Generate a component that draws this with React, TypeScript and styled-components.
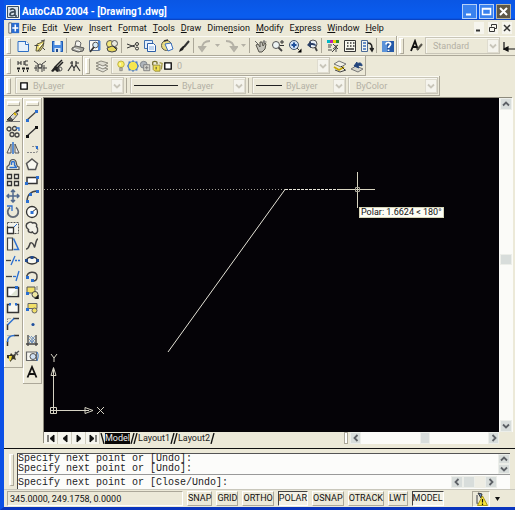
import React from "react";
import styled, { createGlobalStyle, css } from "styled-components";

const UI_FONT = 'Roboto, "Liberation Sans", Arial, sans-serif';
const FACE = "#ece9d8";
const SHADE = "#aca899";
const MUTED = "#b3b0a4";
const BLUE = "#2b6fd0";
const INK = "#333333";

const GlobalStyle = createGlobalStyle`
  * { box-sizing: border-box; }
  body { margin: 0; background: ${FACE}; font-family: ${UI_FONT}; font-size: 9px; color: #111; }
  button, select, input { font: inherit; color: inherit; margin: 0; padding: 0; border: 0; background: none; border-radius: 0; }
  svg { display: block; flex: none; }
`;

/* ---------- icons, all on a 14 × 14 grid ---------- */

const ICONS: Record<string, React.ReactNode> = {
  fresh: <><path d="M2 2.500h8l2.500 2.500v7.500H2z" fill="#e6f1fb" stroke="#2f6fc4" /><path d="M9.500 2v3.500H13" fill="#fff" stroke="#2f6fc4" /></>,
  open: <><path d="M3 12l1-7 3-1 4-2-1 6-3 4z" fill="#f1e27a" stroke="#5f5a3a" /><path d="M1.500 6.500h4M5 12l6-8M8 2l4-1M10 9l2 2" stroke="#444" fill="none" /><path d="M6 8l3-3" stroke="#fff" /></>,
  save: <><path d="M2 2h11v11H2z" fill="#4b8be0" /><path d="M2.500 2.500h10v10h-10z" fill="none" stroke="#1f5bb2" /><path d="M4.500 2h6v4h-6z" fill="#f7f7f2" /><path d="M4.500 9h6v4h-6z" fill="#dfe8f2" /><path d="M6 10h2v3H6z" fill="#244b85" /></>,
  print: <><path d="M4 7l1-5h3l2 2-1 4" fill="#f4f4ee" stroke="#666" /><path d="M1 9l4-2 8 2-1 3-5 1-6-2z" fill="#a9a9a0" stroke="#555" /><path d="M3 9.500l6 2" stroke="#fff" /></>,
  preview: <><path d="M1.500 1.500h10v10h-10z" fill="#f9f9f4" stroke="#5a6f90" /><path d="M10 2h2.500v9H10" fill="#4a86d8" /><circle cx="7.500" cy="6" r="2.800" fill="#d8ecf8" stroke="#555" /><path d="M6 8l-4 5" stroke="#333" strokeWidth="1.800" /></>,
  publish: <><circle cx="5" cy="5" r="3.500" fill="#f3e779" stroke="#555" /><circle cx="9.500" cy="4.500" r="3" fill="#e8e8dd" stroke="#555" /><path d="M2 9l5-2 5 2-1 3-4 1-4-1z" fill="#e8d85c" stroke="#444" /><path d="M8 7l4 4" stroke="#333" /></>,
  cut: <><path d="M1 5l8 3M1 9l8-3" stroke="#333" fill="none" /><circle cx="11" cy="5" r="1.500" fill="none" stroke="#333" /><circle cx="11" cy="9.500" r="1.500" fill="none" stroke="#333" /></>,
  copy: <><path d="M1.500 1.500h8v8h-8z" fill="#e4effb" stroke="#3f6fae" /><path d="M4.500 4.500h6l2 2v6h-8z" fill="#f7fbff" stroke="#2c5ea8" /><path d="M6 8h5M6 10h5" stroke="#8ab0e0" /></>,
  paste: <><circle cx="6.500" cy="6.500" r="5" fill="#e9dc82" stroke="#5c5a48" /><path d="M5 5l6-1 2 6-5 2z" fill="#f6faff" stroke="#3b70bd" /><path d="M4 2l4-1" stroke="#333" strokeWidth="1.500" /></>,
  match: <><path d="M12 2L7 8" stroke="#333" strokeWidth="2" /><path d="M8 7l-2 4-4 2 1-3 3-3z" fill="#222" /></>,
  undo: <path d="M12 2C7 2 4 4 4 10M1 8l3 4 3-4z" fill="none" stroke="#b4b1a6" strokeWidth="1.800" />,
  redo: <path d="M2 2c5 0 8 2 8 8M7 8l3 4 3-4z" fill="none" stroke="#b4b1a6" strokeWidth="1.800" />,
  pan: <><path d="M2 6l2-1 2 3V3l2 0 1 4 2-3 1 1-1 5-3 3H5z" fill="#c4c3ba" stroke="#55534a" /><path d="M1 2l3 3M10 1v4M8.500 3h4" stroke="#666" /></>,
  zoom: <><circle cx="5" cy="6" r="3.500" fill="#eef4f4" stroke="#555" /><path d="M7.500 8.500L11 12" stroke="#444" strokeWidth="1.800" /><path d="M9 3h4M11 1v4M9 6.500h4" stroke="#333" /></>,
  zoomWin: <><circle cx="6" cy="6" r="4.500" fill="#d3e4f7" stroke="#44546a" /><path d="M3.500 6h5M6 3.500v5" stroke="#1e4f9b" strokeWidth="2" /><path d="M9 9l2 2" stroke="#333" /><path d="M13.500 9.500v4h-4z" fill="#000" /></>,
  zoomPrev: <><circle cx="8" cy="5" r="4" fill="#e7eef5" stroke="#555" /><path d="M10 8l2 4" stroke="#444" strokeWidth="1.800" /><path d="M2 6l4-4v2c4 0 5 1 5 3-2-1-3-1-5-1v3z" fill="#2a3f66" /></>,
  props: <><path d="M1 1h3v3H1z" fill="#00b7c7" /><path d="M4 1h3v3H4z" fill="#c020b0" /><path d="M7 1h3v3H7z" fill="#e6d800" /><path d="M10 1h3v3h-3z" fill="#2b8a36" /><path d="M2 6h4M2 8h3M2 11h4M10 6v7M7 5l5 5M7 10l5-4M6 13l4-4" stroke="#444" /></>,
  center: <><path d="M1.500 1.500h11v11h-11z" fill="#f6f6ee" stroke="#333" /><path d="M4 4h1.500M7 4h1.500M10 4h1.500M4 7h1.500M7 7h1.500M10 7h1.500M3 10h8" stroke="#333" strokeWidth="1.500" /></>,
  palettes: <><path d="M1.500 1.500h6v11h-6z" fill="#f4f5ef" stroke="#4b6a96" /><path d="M3 4h3M3 7h3M3 10h3" stroke="#3a6dbc" strokeWidth="1.500" /><path d="M8 4c4 0 4 3 4 7M10 9l2 3 1.500-3" stroke="#222" fill="none" strokeWidth="1.500" /></>,
  help: <><path d="M1 2h12v11H1z" fill="#2459a8" /><path d="M1 2h5v11H1z" fill="#5b92d8" /><path d="M5 5.500C5 2.500 10 3 9.500 5.500 9 7 7.500 7 7.500 9M7.500 10.500v1.500" stroke="#fff" strokeWidth="1.800" fill="none" /></>,
  textStyle: <><path d="M2 12L6 2l3 9M3 8h5" stroke="#111" strokeWidth="1.800" fill="none" /><path d="M8 11l5-6" stroke="#55534a" strokeWidth="2" /></>,
  dim: <path d="M1 3v8M1 10h12M5 8v4l-4-2z" stroke="#111" fill="#111" strokeWidth="1.200" />,
  etEdit: <><path d="M2 2v4M5 2v4M2 4h3M8 2v4M12 2H9v4h3" stroke="#333" fill="none" /><path d="M1 9.500h3M6 9.500h3M10 9.500h3M2 12h1M7 12h1M11 12h1" stroke="#222" strokeWidth="1.800" /></>,
  etBlock: <><path d="M1 2l4 3v8M13 2L9 5v8M3 6v6M11 6v6M5 9h4M1 9h3M10 9h4" stroke="#444" fill="none" /><circle cx="7" cy="7" r="2" fill="none" stroke="#444" /></>,
  etTool: <><path d="M12 1L5 8M13 3L8 8" stroke="#222" strokeWidth="1.500" /><path d="M1 12l4-5 4 1 1 4-3 1-2-2-2 2z" fill="#222" /><circle cx="10" cy="10" r="2" fill="none" stroke="#555" /></>,
  etStretch: <path d="M1 12l4-6 2 3 2-3 4 6M5 6V2M9 6V2M3 4h3M9 4h3M7 9v3" stroke="#333" fill="none" strokeWidth="1.200" />,
  layers: <><path d="M1 10l5-2 7 2-5 3z" fill="#e3e2d8" stroke="#8d8b80" /><path d="M1 7l5-2 7 2-5 3z" fill="#eeede4" stroke="#8d8b80" /><path d="M1 4l5-2 7 2-5 3z" fill="#dedcd0" stroke="#8d8b80" /></>,
  bulb: <><circle cx="7" cy="5" r="3.800" fill="#f9ee62" stroke="#b5a93c" /><path d="M5.500 9h3v3.500h-3z" fill="#b9b7a8" stroke="#666" strokeWidth=".6" /><path d="M6 3.500v3" stroke="#fff" /></>,
  sun: <><path d="M7 0l2 2 3-.5.500 3L14 7l-1.500 2.500-.500 3-3-.500-2 2-2-2-3 .5-.500-3L0 7l1.500-2.500.500-3 3 .5z" fill="#4a7cc9" /><circle cx="7" cy="7" r="5" fill="#f7e64d" /></>,
  freeze: <><circle cx="5.500" cy="5.500" r="4" fill="#aeb4ba" stroke="#7a7f84" /><path d="M5.500 5.500h7v7h-7z" fill="#d3d3cb" stroke="#777" /><path d="M7 9h4M9 7v4" stroke="#777" /></>,
  lock: <><path d="M2 6V3c0-2 5-2 5 0v2" stroke="#77702e" fill="none" strokeWidth="1.500" /><path d="M2.500 6h8v7h-6l-2-2z" fill="#f1e04e" stroke="#8d8433" /><path d="M10 3l3 1-1 7" stroke="#a59b46" fill="none" strokeWidth="1.500" /><path d="M6 8v3" stroke="#333" /></>,
  swatch: <path d="M2.500 2.500h9v9h-9z" fill="#fff" stroke="#000" strokeWidth="1.800" />,
  layerObj: <><path d="M1 5l5-3 7 3-5 3z" fill="#efeee4" stroke="#777" /><path d="M1 8l5 3 5-3" stroke="#c8a800" fill="none" strokeWidth="1.800" /><path d="M2 11l5 2 6-2" stroke="#444" fill="none" /><path d="M8 7l4 4" stroke="#333" /></>,
  layerPrev: <><path d="M1 10l5-3 7 3-5 3z" fill="#d8d7cc" stroke="#777" /><path d="M4 7l3-4v2c3-2 5-1 5 2-1-1-3-1-4 0l1 2z" fill="#23457c" stroke="#23457c" /></>,
  erase: <><path d="M0 12.500h14" stroke="#777" /><path d="M1 11l3-3 3 3-1 1z" fill="#555" stroke="#333" /><path d="M4 8l5-5 3 2-5 6z" fill="#d8d7cf" stroke="#555" /><path d="M8 4l2 2" stroke="#d9b400" strokeWidth="2" /><path d="M10 3l3-2" stroke="#333" strokeWidth="2" /></>,
  copyObj: <><circle cx="3" cy="4" r="2" fill="none" stroke="#444" strokeWidth="1.300" /><circle cx="8.500" cy="3.500" r="2" fill="none" stroke="#444" strokeWidth="1.300" /><circle cx="6" cy="9.500" r="2" fill="none" stroke="#444" strokeWidth="1.300" /><circle cx="11" cy="10" r="2" fill="none" stroke="#444" strokeWidth="1.300" /><path d="M10 3h3v3" stroke={BLUE} fill="none" strokeWidth="1.300" /></>,
  mirror: <><path d="M5 3v9H1zM9 3v9h4z" fill="#eee" stroke="#555" /><path d="M7 1v12" stroke={BLUE} strokeWidth="1.500" /></>,
  offset: <><path d="M1 12.500h12V10c-2 0-2-1-2.500-3-.500-6-6.500-6-7 0C3 9 1.500 9 1 10z" fill="none" stroke="#555" strokeWidth="1.200" /><path d="M3.500 10.500h7.500M5.500 8V6c0-2 3-2 3 0v2l1.500 2" stroke={BLUE} fill="none" strokeWidth="1.500" /></>,
  array: <path d="M1.500 1.500h4v4h-4zM8.500 1.500h4v4h-4zM1.500 8.500h4v4h-4zM8.500 8.500h4v4h-4z" fill="#f4f3ea" stroke="#333" strokeWidth="1.300" />,
  move: <path d="M7 1v12M1 7h12M5 3l2-2 2 2M5 11l2 2 2-2M3 5L1 7l2 2M11 5l2 2-2 2" stroke="#526a8d" fill="none" strokeWidth="1.500" />,
  rotate: <><path d="M10 2.500a5.300 5.300 0 1 1-6 0" stroke="#626a76" fill="none" strokeWidth="1.800" /><path d="M1 1h5v5" stroke={BLUE} fill="none" strokeWidth="1.300" /></>,
  scale: <><path d="M1.500 1.500h11v11h-11z" fill="#f3f2e9" stroke="#555" strokeDasharray="2 1" /><path d="M1.500 6.500h6v6h-6z" fill="#fff" stroke="#333" strokeWidth="1.300" /><path d="M8 6l3-3" stroke={BLUE} /></>,
  stretch: <><path d="M1.500 1v12h5V1z" fill="#f8f8f2" stroke="#444" strokeWidth="1.200" /><path d="M7.500 1.500l5 11h-5" stroke={BLUE} fill="none" strokeWidth="1.500" /></>,
  trim: <><path d="M0 7.500h5" stroke="#444" strokeWidth="1.300" /><path d="M9 7.500h5" stroke={BLUE} strokeDasharray="2 1" strokeWidth="1.300" /><path d="M9 3l-4 9" stroke={BLUE} strokeWidth="1.300" /></>,
  extend: <><path d="M0 7.500h6" stroke="#444" strokeWidth="1.300" /><path d="M7 7.500h3" stroke={BLUE} strokeWidth="1.300" /><path d="M13 2l-3 10" stroke={BLUE} strokeWidth="1.300" /></>,
  breakPt: <><path d="M1.500 2.500h11v9h-11z" fill="#fff" stroke="#333" strokeWidth="1.500" /><path d="M4 11l7-7v7z" fill="#dfe5d6" /><path d="M9 1h3v3H9z" fill={BLUE} /></>,
  breakGap: <><path d="M4 3.500H1.500v8h11v-8H10" fill="#f8f8f2" stroke="#333" strokeWidth="1.500" /><path d="M3 2h2v2.500H3zM9 2h2v2.500H9z" fill={BLUE} /></>,
  chamfer: <><path d="M1.500 13V7M7 1.500h6" stroke="#333" strokeWidth="1.500" /><path d="M1.500 8L8 1.500" stroke={BLUE} strokeWidth="1.500" /><path d="M1.500 1.500h4M1.500 2v4" stroke="#888" strokeDasharray="1 1" /></>,
  fillet: <><path d="M1.500 13V8M8 2.500h5" stroke="#333" strokeWidth="1.500" /><path d="M1.500 9c0-5 3-6.500 7-6.500" fill="none" stroke={BLUE} strokeWidth="1.500" /><path d="M1.500 2.500h4" stroke="#888" strokeDasharray="1 1" /></>,
  explode: <><path d="M1 6l3 0 1-2 2 2 3-1-1 3 1 3-3-1-3 3 0-3-3-1z" fill="#3a3728" /><path d="M3 7l3 0-1 4-2 1z" fill="#f0d836" /><path d="M8 6l5-4M9 3l3 3" stroke="#555" strokeWidth="1.500" /></>,
  line: <><path d="M2 11L12 2" stroke="#444" strokeWidth="1.300" /><path d="M1 10h3v3H1zM10 1h3v3h-3z" fill={BLUE} /></>,
  xline: <><path d="M2 11L12 2" stroke="#333" strokeWidth="1.300" /><path d="M1 10h3v3H1zM10 1h3v3h-3z" fill="#111" /></>,
  pline: <><path d="M2 11.500h9c3-1 2-7-2-6H7" fill="none" stroke="#888" strokeDasharray="2 1" strokeWidth="1.200" /><path d="M11 5h2v3h-2z" fill={BLUE} /></>,
  polygon: <path d="M7 2l5.500 4.500-2 6h-7l-2-6z" fill="#f8f8f0" stroke="#555" strokeWidth="1.500" />,
  rect: <><path d="M2 4.500h10v6H2z" fill="#fff" stroke="#333" strokeWidth="1.500" /><path d="M0 9h3v3H0zM11 3h3v3h-3z" fill={BLUE} /></>,
  arc: <><path d="M2 12C2 6 6 2 12 2" stroke="#444" fill="none" strokeWidth="1.300" /><path d="M1 11h3v3H1zM4 4h3v3H4zM11 1h3v3h-3z" fill={BLUE} /></>,
  circle: <><circle cx="7" cy="7" r="5.500" fill="#fcfcf8" stroke="#333" strokeWidth="1.300" /><path d="M7 7l4-3" stroke="#333" /><path d="M5.500 6h3v3h-3z" fill={BLUE} /></>,
  cloud: <path d="M3 2c2-1.500 4-.5 4.500 0 3-1 5 1 4 3.500 2 2 1 4.500 1 5-1 3-4 2.500-5 .500-2 1-5 0-4-2.500C0 6 1 3 3 2z" fill="#f2f1e8" stroke="#444" strokeWidth="1.500" />,
  spline: <path d="M1 12c4 0 3-8 6-6s2 6 3 3 1-7 3-7" fill="none" stroke="#444" strokeWidth="1.500" />,
  ellipse: <><ellipse cx="7" cy="7.500" rx="5.500" ry="3.500" fill="#f6f6ee" stroke="#333" strokeWidth="1.500" /><path d="M0 6h3v3H0zM11 6h3v3h-3zM5.500 3h3v3h-3z" fill="#234a8c" /></>,
  ellipseArc: <><path d="M2 9C0 2 13 1 12 8c0 3-2 4-4 4" fill="none" stroke="#444" strokeWidth="1.500" /><path d="M1 7h3v3H1zM6 10h3v3H6z" fill={BLUE} /></>,
  insert: <><path d="M2 2h8v6H2z" fill="#f1df68" stroke="#555" /><circle cx="10" cy="9.500" r="3" fill="#efe6a0" stroke="#444" /><path d="M1 7h3v3H1z" fill={BLUE} /><path d="M12 1v4M13.500 14v-4l-4 4z" stroke="#222" fill="#111" strokeWidth=".5" /></>,
  makeBlock: <><path d="M3 2.500h9v5H3z" fill="#f1df68" stroke="#666" /><circle cx="9.500" cy="9.500" r="2.500" fill="#f1df68" stroke="#666" /><path d="M1 7h3v3H1z" fill={BLUE} /></>,
  point: <circle cx="8" cy="7.500" r="1.600" fill="#1f4f9e" />,
  hatch: <><path d="M3 2v11M11 2v11M1 11h12" stroke="#444" strokeWidth="1.300" /><path d="M4 3l6 7M4 6l4 4M6 3l4 4M10 3l-6 7M10 6l-4 4" stroke="#5a82b8" strokeWidth=".8" /></>,
  region: <><path d="M1.500 3h10v8.500h-10z" fill="#f7f7f0" stroke="#666" strokeWidth="1.200" /><circle cx="8" cy="7.500" r="3" fill="#cfe0f4" stroke="#555" /><path d="M12 3c2 3 1 6 0 9" stroke={BLUE} fill="none" /></>,
  mtext: <path d="M2.500 12.500L7 2l4.500 10.500M4 9h6" fill="none" stroke="#111" strokeWidth="1.800" />,
  app: <><path d="M0 0h14v14H0z" fill="#f0f2f4" /><path d="M1.500 1.500h11v11h-11z" fill="#d7e2ec" stroke="#3c4f60" /><path d="M4 5c2-2 5-1 5 1v5M9 7C5 6.500 4 8 4 9.500S8 11.500 9 9M9 11h2" fill="none" stroke="#3c4a58" strokeWidth="1.700" /></>,
  doc: <><path d="M1 1h3v12H1z" fill="#fff" stroke="#555" /><path d="M4 1h9v12H4z" fill="#2a6cd0" /><path d="M8.500 3v8M5 7h7" stroke="#fff" strokeWidth="1.800" /></>,
  tray: <><path d="M4 1l4 1-1 4z" fill="#6d93c8" stroke="#333" /><path d="M3 3v8l2 1" stroke="#777" fill="none" strokeWidth="1.500" /><path d="M8.500 4l5 9.500h-10z" fill="#f8e53c" stroke="#a89513" /><path d="M8.500 7v3.500M8.500 11.500V13" stroke="#111" strokeWidth="1.200" /></>,
};

const Icon = ({ name, size = 14 }: { name: string; size?: number }) => (
  <svg width={size} height={size} viewBox="0 0 14 14" fill="none" aria-hidden="true">{ICONS[name]}</svg>
);

const TURN = { up: 0, right: 90, down: 180, left: 270 };
const Chevron = ({ dir, color = "#5d6166" }: { dir: keyof typeof TURN; color?: string }) => (
  <svg width="8" height="8" viewBox="0 0 8 8" aria-hidden="true">
    <path d="M1 5.500l3-3 3 3" fill="none" stroke={color} strokeWidth="1.800" transform={`rotate(${TURN[dir]} 4 4)`} />
  </svg>
);

/* ---------- window frame ---------- */

const Window = styled.div`
  display: flex;
  flex-direction: column;
  min-height: 100vh;
  background: ${FACE};
  border: solid #0a4fe0;
  border-width: 0 0 3px 4px;
  border-left-color: #0b50e6;
  border-bottom-color: #0a35bd;
`;

const TitleBar = styled.header`
  display: flex;
  align-items: center;
  height: 20px;
  padding: 3px 4px 0 2px;
  gap: 2px;
  background: linear-gradient(#0a56e4, #0a5cee 70%, #0a5cee 90%, #0a3cb8);
`;

const Title = styled.h1`
  flex: 1;
  margin: 0;
  font-size: 10px;
  line-height: 14px;
  font-weight: bold;
  color: #fff;
  white-space: nowrap;
`;

const Caption = styled.button<{ $dark?: boolean }>`
  display: grid;
  place-items: center;
  width: 15px;
  height: 15px;
  border: 1px solid ${p => (p.$dark ? "#b8b4a0" : "#b5d0f8")};
  background: ${p => (p.$dark ? "#5d5747" : "#3a82ee")};
`;

const MenuBar = styled.nav`
  display: flex;
  align-items: center;
  height: 16px;
  padding: 0 3px 0 4px;
  gap: 6px;
`;

const MenuItem = styled.button`
  font-size: 9px;
  line-height: 14px;
  white-space: nowrap;
  u { text-underline-offset: 1px; }
`;

const DocIcon = styled.span`
  margin-right: -4px;
`;

const DocControls = styled.div`
  display: flex;
  gap: 4px;
  margin-left: auto;
`;

const DocButton = styled.button`
  display: grid;
  place-items: center;
  width: 10px;
  height: 12px;
  background: #f6f5ee;
`;

/* ---------- toolbars ---------- */

const ToolbarRow = styled.div`
  display: flex;
  height: 20px;
  overflow: hidden;
`;

const Toolbar = styled.div<{ $fill?: boolean }>`
  display: flex;
  align-items: center;
  flex: ${p => (p.$fill ? "1 0 auto" : "none")};
  border: solid ${SHADE};
  border-width: 0 1px 1px 0;
  box-shadow: inset 1px 1px #fbfaf4;
`;

const Grip = styled.span<{ $flat?: boolean }>`
  flex: none;
  border: 1px solid #fff;
  border-right-color: ${SHADE};
  border-bottom-color: ${SHADE};
  ${p =>
    p.$flat
      ? css`width: 13px; height: 5px; margin: 3px 0 2px; border-width: 2px 1px 1px;`
      : css`width: 5px; height: 16px; margin: 0 3px 0 2px; border-width: 1px 1px 1px 2px;`}
`;

const ToolButton = styled.button<{ $slim?: boolean }>`
  display: grid;
  place-items: center;
  flex: none;
  width: ${p => (p.$slim ? 9 : 17)}px;
  height: 16px;
`;

const Divider = styled.span`
  flex: none;
  width: 1px;
  height: 15px;
  margin: 0 2px 0 1px;
  background: ${SHADE};
`;

const Combo = styled.label<{ $width: number }>`
  display: flex;
  align-items: center;
  width: ${p => p.$width}px;
  height: 17px;
  margin: 0 1px;
  padding-left: 3px;
  border: 1px solid #c9c6b8;
  box-shadow: inset 1px 1px #f8f7f0;
  color: ${MUTED};
`;

const ComboSelect = styled.select`
  appearance: none;
  flex: 1;
  min-width: 0;
  height: 14px;
  padding-left: 4px;
  font-size: 9px;
  outline: none;
`;

const ComboArrow = styled.span`
  display: grid;
  place-items: center;
  width: 12px;
  height: 14px;
  background: #f5f4ed;
  border: 1px solid #dfdccf;
`;

const LineSample = styled.span<{ $width: number }>`
  width: ${p => p.$width}px;
  height: 1px;
  background: #222;
`;

const Dropdown = (p: { label: string; value: string; width: number; children?: React.ReactNode }) => (
  <Combo $width={p.width}>
    {p.children}
    <ComboSelect aria-label={p.label} defaultValue={p.value}>
      <option>{p.value}</option>
    </ComboSelect>
    <ComboArrow><Chevron dir="down" color="#c9c6ba" /></ComboArrow>
  </Combo>
);

const Tools = ({ names }: { names: string[] }) => (
  <>
    {names.map((n, i) =>
      n === "|" ? <Divider key={i} /> :
      n === "v" ? (
        <ToolButton key={i} $slim aria-label="more">
          <svg width="5" height="3" viewBox="0 0 5 3"><path d="M0 0h5L2.500 3z" fill="#b4b1a6" /></svg>
        </ToolButton>
      ) : <ToolButton key={i} aria-label={n}><Icon name={n} /></ToolButton>
    )}
  </>
);

/* ---------- work area ---------- */

const Work = styled.main`
  display: flex;
  flex: 1;
  padding-top: 2px;
`;

const SideBar = styled.div`
  display: flex;
  flex-direction: column;
  align-items: center;
  align-self: flex-start;
  width: 19px;
  padding-bottom: 3px;
  border: solid ${SHADE};
  border-width: 0 1px 1px 0;
  box-shadow: inset 1px 1px #fff;
`;

const View = styled.section`
  display: grid;
  grid-template: 1fr 12px / 1fr 14px;
  flex: 1;
  margin: 0 2px 4px 2px;
  box-shadow: -1px -1px #8d8a7c;
`;

const Canvas = styled.div`
  position: relative;
  overflow: hidden;
  background: #050307;
`;

const Drawing = styled.svg`
  position: absolute;
  left: 0;
  top: 0;
`;

const Ucs = styled.svg`
  position: absolute;
  left: 4px;
  bottom: 17px;
`;

const Polar = styled.div`
  position: absolute;
  left: 315px;
  top: 109px;
  padding: 0 1px;
  border: 1px solid #d8d6b8;
  background: #fdfdf6;
  font-size: 9px;
  line-height: 9px;
  white-space: nowrap;
`;

const ScrollTrack = styled.div<{ $row?: boolean }>`
  display: flex;
  flex-direction: ${p => (p.$row ? "row" : "column")};
  align-items: center;
  justify-content: space-between;
  background: #fbfbf8;
`;

const ScrollButton = styled.button<{ $w?: number; $h?: number }>`
  display: grid;
  place-items: center;
  flex: none;
  width: ${p => p.$w ?? 12}px;
  height: ${p => p.$h ?? 12}px;
  border: 1px solid #eceee9;
  background: #d8dddb;
`;

const ViewThumb = styled(ScrollButton)`
  margin-bottom: 12px;
`;

const TabRow = styled.div`
  display: flex;
  align-items: stretch;
  height: 12px;
`;

const NavButton = styled.button`
  display: grid;
  place-items: center;
  width: 14px;
  border-right: 1px solid #d0cdbf;
  background: #f6f5ee;
`;

const Tab = styled.button<{ $active?: boolean }>`
  display: flex;
  align-items: center;
  margin-right: -2px;
  font-size: 9px;
  line-height: 11px;
  span { height: 11px; background: ${p => (p.$active ? "#0a0808" : "transparent")}; color: ${p => (p.$active ? "#eee" : "#222")}; }
`;

const HScroll = styled.div`
  display: flex;
  width: 155px;
  margin-left: auto;
  gap: 2px;
  > :last-child { flex: 1; }
`;

const SplitBox = styled.span`
  width: 4px;
  border: 1px solid ${SHADE};
  background: #fff;
`;

/* ---------- command line and status bar ---------- */

const CommandPanel = styled.section`
  display: flex;
  border-top: 1px solid #111;
  padding: 4px 5px 0 3px;
`;

const CommandBody = styled.div`
  flex: 1;
  min-width: 0;
  border-top: 1px solid #555;
  border-left: 1px solid #444;
  background: #fcfcfa;
  font-family: "Liberation Mono", "Courier New", monospace;
  font-size: 10px;
  color: #222;
`;

const History = styled.div`
  display: flex;
  justify-content: space-between;
  height: 21px;
  border-bottom: 1px solid #999;
  line-height: 10px;
  white-space: pre;
`;

const Prompt = styled.label`
  display: flex;
  align-items: center;
  height: 14px;
  white-space: nowrap;
`;

const PromptInput = styled.input`
  flex: 1;
  min-width: 0;
  height: 13px;
  outline: none;
`;

const PromptScroll = styled.span`
  display: flex;
  width: 46px;
  margin-right: 13px;
  background: #eeede4;
  > :last-child { margin-left: auto; }
`;

const VerticalGrip = styled(Grip)`
  height: 32px;
  margin: 1px 3px 0 2px;
`;

const StatusBar = styled.footer`
  display: flex;
  align-items: center;
  height: 18px;
  padding: 0 3px;
  gap: 4px;
  border-top: 1px solid #c9c7bb;
`;

const Coordinates = styled.output`
  width: 176px;
  height: 15px;
  padding-left: 2px;
  border: 1px solid ${SHADE};
  border-right-color: #fff;
  border-bottom-color: #fff;
  font-size: 9px;
  line-height: 14px;
  white-space: nowrap;
`;

const Toggle = styled.button<{ $on?: boolean }>`
  height: 15px;
  font-size: 9px;
  line-height: 13px;
  white-space: nowrap;
  border: 1px solid;
  border-color: ${p => (p.$on ? "#444 #fff #fff #444" : `#fff ${SHADE} ${SHADE} #fff`)};
  background: ${p => (p.$on ? "#f3f1e6" : FACE)};
`;

const Tray = styled.div`
  display: flex;
  align-items: center;
  gap: 5px;
  margin-left: auto;
  padding-right: 12px;
`;

const TrayBox = styled.span`
  padding: 0 1px;
  border: 1px solid ${SHADE};
  border-right-color: #fff;
  border-bottom-color: #fff;
`;

const MENUS: [string, string, string][] = [
  ["", "F", "ile"], ["", "E", "dit"], ["", "V", "iew"], ["", "I", "nsert"], ["F", "o", "rmat"], ["", "T", "ools"],
  ["", "D", "raw"], ["Dime", "n", "sion"], ["", "M", "odify"], ["E", "x", "press"], ["", "W", "indow"], ["", "H", "elp"],
];

const MODIFY = ["erase", "copyObj", "mirror", "offset", "array", "move", "rotate", "scale", "stretch", "trim", "extend", "breakPt", "breakGap", "chamfer", "fillet", "explode"];
const DRAW = ["line", "xline", "pline", "polygon", "rect", "arc", "circle", "cloud", "spline", "ellipse", "ellipseArc", "insert", "makeBlock", "point", "hatch", "region", "mtext"];
const STANDARD = ["fresh", "open", "save", "|", "print", "preview", "publish", "|", "cut", "copy", "paste", "match", "|", "undo", "v", "redo", "v", "|", "pan", "zoom", "zoomWin", "zoomPrev", "|", "props", "center", "palettes", "|", "help"];
const NAV = ["M2 1v7M8 1v7L4 4.500z", "M7 1v7L3 4.500z", "M3 1v7l4-3.500z", "M8 1v7M2 1v7l4-3.500z"];
const TOGGLES: [string, boolean][] = [["SNAP", false], ["GRID", false], ["ORTHO", false], ["POLAR", true], ["OSNAP", false], ["OTRACK", false], ["LWT", false], ["MODEL", true]];

const Slash = ({ flip }: { flip?: boolean }) => (
  <svg width="5" height="11" viewBox="0 0 5 11"><path d={flip ? "M1 0l3 11" : "M4 0L1 11"} stroke="#111" strokeWidth="1.300" /></svg>
);

export default function App() {
  return (
    <Window>
      <GlobalStyle />
      <TitleBar>
        <Icon name="app" />
        <Title>AutoCAD 2004 - [Drawing1.dwg]</Title>
        <Caption aria-label="Minimize"><svg width="11" height="11"><path d="M2 8.500h5" stroke="#fff" strokeWidth="2" /></svg></Caption>
        <Caption aria-label="Maximize"><svg width="11" height="11"><path d="M1.500 2.500h8v6h-8zM1 3h9" stroke="#fff" strokeWidth="1.500" fill="none" /></svg></Caption>
        <Caption $dark aria-label="Close"><svg width="11" height="11"><path d="M2 2l7 7M9 2L2 9" stroke="#fff" strokeWidth="2" /></svg></Caption>
      </TitleBar>

      <MenuBar>
        <DocIcon><Icon name="doc" size={12} /></DocIcon>
        {MENUS.map(([a, key, b]) => <MenuItem key={a + key + b}>{a}<u>{key}</u>{b}</MenuItem>)}
        <DocControls>
          <DocButton aria-label="Minimize drawing"><svg width="8" height="8"><path d="M1 6.500h4" stroke={INK} strokeWidth="2" /></svg></DocButton>
          <DocButton aria-label="Restore drawing"><svg width="8" height="8"><path d="M2.500 2.500v-2h5v4h-2M.5 3.500h5v4h-5z" stroke={INK} fill="none" /></svg></DocButton>
          <DocButton aria-label="Close drawing"><svg width="8" height="8"><path d="M1 1l6 6M7 1L1 7" stroke={INK} strokeWidth="1.500" /></svg></DocButton>
        </DocControls>
      </MenuBar>

      <ToolbarRow>
        <Toolbar><Grip /><Tools names={STANDARD} /></Toolbar>
        <Toolbar $fill>
          <Grip />
          <Tools names={["textStyle"]} />
          <Dropdown label="Text style" value="Standard" width={75} />
          <Tools names={["dim"]} />
        </Toolbar>
      </ToolbarRow>
      <ToolbarRow>
        <Toolbar><Grip /><Tools names={["etEdit", "etBlock", "etTool", "etStretch"]} /></Toolbar>
        <Toolbar>
          <Grip />
          <Tools names={["layers"]} />
          <Dropdown label="Layer" value="0" width={219}>
            {["bulb", "sun", "freeze", "lock", "swatch"].map(n => <Icon key={n} name={n} size={n === "swatch" ? 10 : 12} />)}
          </Dropdown>
          <Tools names={["layerObj", "layerPrev"]} />
        </Toolbar>
      </ToolbarRow>
      <ToolbarRow>
        <Toolbar>
          <Grip />
          <Dropdown label="Color" value="ByLayer" width={109}><Icon name="swatch" size={10} /></Dropdown>
          <Divider />
          <Dropdown label="Linetype" value="ByLayer" width={116}><LineSample $width={44} /></Dropdown>
          <Divider />
          <Dropdown label="Lineweight" value="ByLayer" width={94}><LineSample $width={26} /></Dropdown>
          <Dropdown label="Plot style" value="ByColor" width={90} />
        </Toolbar>
      </ToolbarRow>

      <Work>
        <SideBar><Grip $flat /><Tools names={MODIFY} /></SideBar>
        <SideBar><Grip $flat /><Tools names={DRAW} /></SideBar>
        <View>
          <Canvas>
            <Drawing width="456" height="334" viewBox="0 0 456 334">
              <path d="M0 91.500h241" stroke="#a3a096" strokeDasharray="1 2" />
              <path d="M241 91.500h54" stroke="#e8e6da" strokeDasharray="3 1" />
              <path d="M124 254L241 91.500" stroke="#e4e2d6" />
              <path d="M313.500 74v36M294 91.500h37" stroke="#d9d5c0" />
              <path d="M311.500 89.500h4v4h-4z" stroke="#aaa79a" fill="none" />
            </Drawing>
            <Ucs width="60" height="62" viewBox="0 0 60 62">
              <path d="M2.500 54.500h6v6h-6zM5.500 60V15M3 57.500h38M3 22.500l2.500-8 2.500 8zM37 54.500l8 3-8 3z" stroke="#d6d3c4" fill="none" />
              <path d="M49 54l7 7M56 54l-7 7M3 1l3 4 3-4M6 5v4" stroke="#d6d3c4" fill="none" />
            </Ucs>
            <Polar>Polar: 1.6624 &lt; 180°</Polar>
          </Canvas>
          <ScrollTrack>
            <ScrollButton aria-label="Scroll up"><Chevron dir="up" /></ScrollButton>
            <ViewThumb aria-label="Vertical thumb" $h={11} />
            <ScrollButton aria-label="Scroll down"><Chevron dir="down" /></ScrollButton>
          </ScrollTrack>
          <TabRow>
            {NAV.map((d, i) => (
              <NavButton key={d} aria-label={["First", "Previous", "Next", "Last"][i] + " layout"}>
                <svg width="9" height="9"><path d={d} stroke="#111" fill="#111" /></svg>
              </NavButton>
            ))}
            <Tab $active><Slash flip /><span>Model</span><Slash /></Tab>
            <Tab><Slash /><span>Layout1</span><Slash /></Tab>
            <Tab><Slash /><span>Layout2</span><Slash /></Tab>
            <HScroll>
              <SplitBox />
              <ScrollTrack $row>
                <ScrollButton aria-label="Scroll left" $w={11}><Chevron dir="left" /></ScrollButton>
                <ScrollButton aria-label="Horizontal thumb" $w={10} />
                <ScrollButton aria-label="Scroll right" $w={11}><Chevron dir="right" /></ScrollButton>
              </ScrollTrack>
            </HScroll>
          </TabRow>
        </View>
      </Work>

      <CommandPanel>
        <VerticalGrip />
        <CommandBody>
          <History>
            <span>{"Specify next point or [Undo]:\nSpecify next point or [Undo]:"}</span>
            <ScrollTrack>
              <ScrollButton aria-label="History up" $h={10}><Chevron dir="up" /></ScrollButton>
              <ScrollButton aria-label="History down" $h={10}><Chevron dir="down" /></ScrollButton>
            </ScrollTrack>
          </History>
          <Prompt>
            Specify next point or [Close/Undo]:
            <PromptInput type="text" aria-label="Command" />
            <PromptScroll>
              <ScrollButton aria-label="Prompt left"><Chevron dir="left" /></ScrollButton>
              <ScrollButton aria-label="Prompt thumb" />
              <ScrollButton aria-label="Prompt right"><Chevron dir="right" /></ScrollButton>
            </PromptScroll>
          </Prompt>
        </CommandBody>
      </CommandPanel>

      <StatusBar>
        <Coordinates>345.0000, 249.1758, 0.0000</Coordinates>
        {TOGGLES.map(([name, on]) => <Toggle key={name} $on={on} aria-pressed={on}>{name}</Toggle>)}
        <Tray>
          <TrayBox><Icon name="tray" /></TrayBox>
          <svg width="5" height="4"><path d="M0 0h5L2.500 4z" fill="#111" /></svg>
        </Tray>
      </StatusBar>
    </Window>
  );
}
